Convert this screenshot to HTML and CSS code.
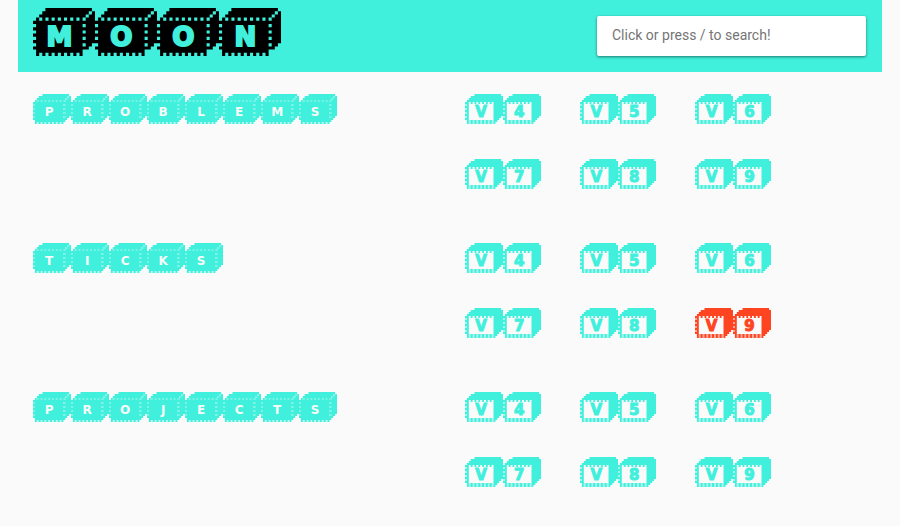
FILE: index.html
```html
<!DOCTYPE html>
<html lang="en">
<head>
<meta charset="utf-8">
<title>Moon</title>
<link rel="stylesheet" href="styles.css">
</head>
<body>
<svg class="sprites" aria-hidden="true">
  <symbol id="cube-solid" viewBox="0 0 20 15" preserveAspectRatio="none">
    <path fill-rule="evenodd" d="M4 0H19V1H20V11H19V12H18V13H16V15H15V14H14V15H13V14H12V15H11V14H10V15H9V14H8V15H7V14H6V15H5V14H4V15H3V14H2V15H1V13H0V12H1V11H0V10H1V9H0V8H1V7H0V6H1V5H0V4H1V3H2V2H3V1H4ZM2 3h1v1h-1zM4 3h1v1h-1zM6 3h1v1h-1zM8 3h1v1h-1zM10 3h1v1h-1zM12 3h1v1h-1zM14 3h1v1h-1zM16 3h1v1h-1zM17 2h1v1h-1zM18 1h1v1h-1zM16 5h1v1h-1zM16 7h1v1h-1zM16 9h1v1h-1zM16 11h1v1h-1z"/>
  </symbol>
  <symbol id="cube-soft" viewBox="0 0 20 15" preserveAspectRatio="none">
    <path fill-rule="evenodd" d="M5 0H19V1H20V11H19V12H18V13H17V14H16V15H15V14H14V15H13V14H12V15H11V14H10V15H9V14H8V15H7V14H6V15H5V14H4V15H3V14H2V15H1V13H0V12H1V11H0V10H1V9H0V8H1V7H0V6H1V5H0V4H1V3H2V2H3V1H5ZM2 3h1v1h-1zM4 3h1v1h-1zM6 3h1v1h-1zM8 3h1v1h-1zM10 3h1v1h-1zM12 3h1v1h-1zM14 3h1v1h-1zM16 3h1v1h-1zM17 2h1v1h-1zM18 1h1v1h-1zM16 5h1v1h-1zM16 7h1v1h-1zM16 9h1v1h-1zM16 11h1v1h-1z"/>
    <path fill-opacity=".7" d="M2 3h15v1h-15zM17 2h1v1h-1zM18 1h1v1h-1zM16 5h1v7h-1zM0 5h1v7h-1z"/>
    <path fill-opacity=".35" d="M2 14h13v1h-13z"/>
  </symbol>
  <symbol id="cube-open" viewBox="0 0 20 15" preserveAspectRatio="none">
    <path fill-rule="evenodd" d="M5 0H19V1H20V11H19V12H18V13H17V14H16V15H15V13H14V15H13V13H12V15H11V13H10V15H9V13H8V15H7V13H6V15H5V13H4V15H3V13H2V15H1V13H0V12H1V11H0V10H1V9H0V8H1V7H0V6H1V5H0V4H1V3H2V2H3V1H5ZM2 13V4h1v1h1v-1h1v1h1v-1h1v1h1v-1h1v1h1v-1h1v1h1v-1h1v1h1v-1h1v9z"/>
    <path fill-opacity=".45" d="M0 5h1v7h-1zM2 13h13v2h-13z"/>
  </symbol>
</svg>
<header class="topbar">
  <h1 class="logo cubes" data-cube="solid">MOON</h1>
  <input class="search" type="search" aria-label="Search" placeholder="Click or press / to search!">
</header>
<main>
  <section class="group">
    <h2 class="title cubes" data-cube="soft">PROBLEMS</h2>
    <nav class="levels" aria-label="Problems">
      <a class="cubes" data-cube="open" href="#p4">V4</a>
      <a class="cubes" data-cube="open" href="#p5">V5</a>
      <a class="cubes" data-cube="open" href="#p6">V6</a>
      <a class="cubes" data-cube="open" href="#p7">V7</a>
      <a class="cubes" data-cube="open" href="#p8">V8</a>
      <a class="cubes" data-cube="open" href="#p9">V9</a>
    </nav>
  </section>
  <section class="group">
    <h2 class="title cubes" data-cube="soft">TICKS</h2>
    <nav class="levels" aria-label="Ticks">
      <a class="cubes" data-cube="open" href="#t4">V4</a>
      <a class="cubes" data-cube="open" href="#t5">V5</a>
      <a class="cubes" data-cube="open" href="#t6">V6</a>
      <a class="cubes" data-cube="open" href="#t7">V7</a>
      <a class="cubes" data-cube="open" href="#t8">V8</a>
      <a class="cubes active" data-cube="open" href="#t9">V9</a>
    </nav>
  </section>
  <section class="group">
    <h2 class="title cubes" data-cube="soft">PROJECTS</h2>
    <nav class="levels" aria-label="Projects">
      <a class="cubes" data-cube="open" href="#j4">V4</a>
      <a class="cubes" data-cube="open" href="#j5">V5</a>
      <a class="cubes" data-cube="open" href="#j6">V6</a>
      <a class="cubes" data-cube="open" href="#j7">V7</a>
      <a class="cubes" data-cube="open" href="#j8">V8</a>
      <a class="cubes" data-cube="open" href="#j9">V9</a>
    </nav>
  </section>
</main>
<script src="cubes.js"></script>
</body>
</html>
```
FILE: styles.css
```css
* {
  box-sizing: border-box;
}

body {
  margin: 0 18px;
  background: #fafafa;
  color: #40f0dc;
  font-family: Roboto, "Liberation Sans", sans-serif;
}

h1,
h2 {
  margin: 0;
}

.sprites {
  display: none;
}

.topbar {
  display: flex;
  justify-content: space-between;
  align-items: center;
  padding: 8px 16px 16px 15px;
  background: #40f0dc;
}

.search {
  width: 269px;
  height: 40px;
  margin-top: 8px;
  padding: 0 15px 2px;
  border: 0;
  border-radius: 2px;
  background: #fff;
  box-shadow: 0 1px 3px rgba(0, 0, 0, 0.5);
  color: #333;
  font: 14px Roboto, "Liberation Sans", sans-serif;
}

.search::placeholder {
  color: #757575;
  opacity: 1;
}

/* Words set in cubes: one block per letter */
.cubes {
  display: flex;
  font-family: "DejaVu Sans", sans-serif;
  font-weight: 700;
  text-decoration: none;
  color: inherit;
}

.cube {
  display: grid;
  width: 38px;
  height: 30px;
}

.cube svg,
.letter {
  grid-area: 1 / 1;
}

.cube svg {
  width: 100%;
  height: 100%;
  fill: currentColor;
}

.letter {
  z-index: 1;
  width: 85%;
  padding-top: 12px;
  text-align: center;
  font-size: 12px;
  line-height: 12px;
}

.logo {
  color: #000;
}

.logo .cube {
  width: 62px;
  height: 48px;
}

.logo .letter {
  padding-top: 16px;
  color: #40f0dc;
  font-size: 26px;
  line-height: 26px;
  -webkit-text-stroke: 2px;
}

.title .letter {
  color: #fafafa;
}

.levels .letter {
  padding-top: 10px;
  font-size: 15px;
  line-height: 16px;
  -webkit-text-stroke: 1px;
}

.cubes.active {
  color: #ff4422;
}

main {
  padding-top: 22px;
}

.group {
  display: grid;
  grid-template-columns: 1fr 1fr;
  margin-bottom: 54px;
}

.title {
  padding-left: 15px;
}

.levels {
  display: grid;
  grid-template-columns: repeat(3, 1fr);
  row-gap: 35px;
  width: 80%;
}

.levels a {
  padding-left: 15px;
}
```
FILE: cubes.js
```js
// Wraps every letter of a .cubes word in its own block.
document.querySelectorAll('.cubes').forEach(function (word) {
  var letters = word.textContent.trim().split('');
  word.innerHTML = letters.map(function (ch) {
    return '<span class="cube"><svg aria-hidden="true"><use href="#cube-' +
      word.dataset.cube + '"/></svg><span class="letter">' + ch + '</span></span>';
  }).join('');
});
```
